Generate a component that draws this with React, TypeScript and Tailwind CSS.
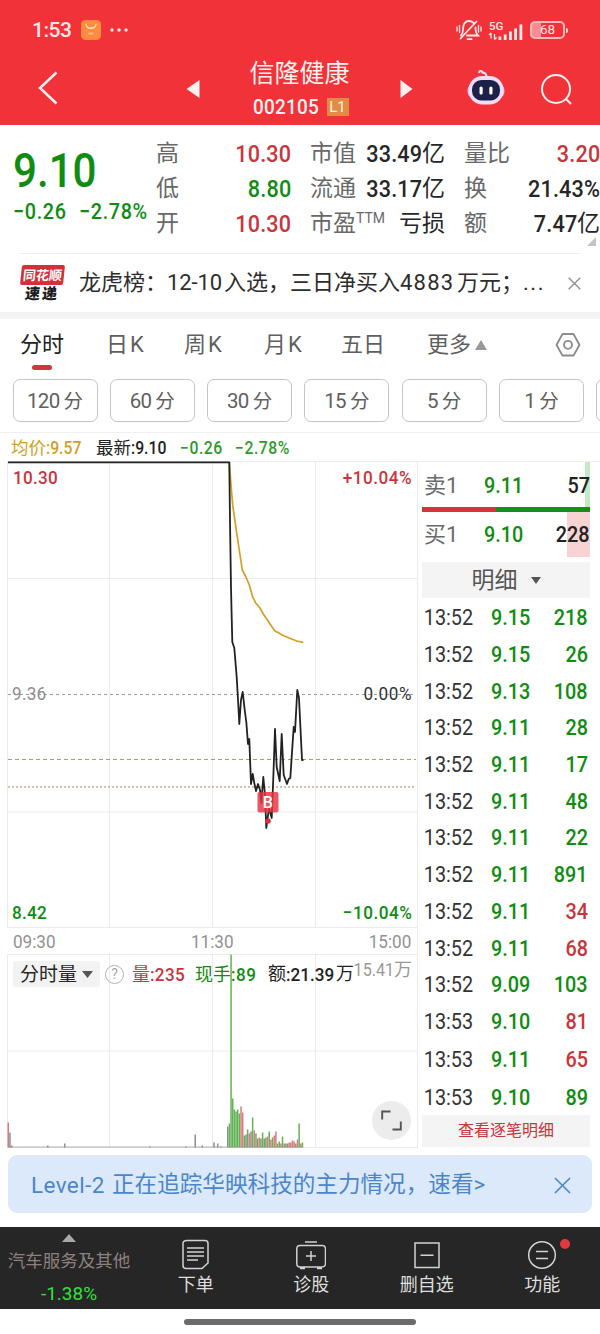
import React from 'react';

const RED = 'text-[#c8353d]';
const GREEN = 'text-[#108c12]';

type NumProps = { children: React.ReactNode; className?: string; left?: boolean };

// Slightly condensed digits
const Num: React.FC<NumProps> = ({ children, className = '', left }) => (
  <span className={`inline-block scale-x-90 whitespace-nowrap ${left ? 'origin-left' : 'origin-right'} ${className}`}>
    {children}
  </span>
);

const StatusBar: React.FC = () => (
  <div className="flex h-[60px] items-center pl-[32px] pr-[32px] text-[#ffe9e9]">
    <span className="w-[49px] text-[21px] font-medium leading-none tracking-[-0.5px]">1:53</span>
    <svg className="h-5 w-5" viewBox="0 0 20 20">
      <rect width="20" height="20" rx="4.5" fill="#ff8b3d" />
      <path d="M5 4.5C6 9.500 14 9.500 15 4.500" fill="none" stroke="#ffe3bd" strokeWidth="1.300" strokeLinecap="round" />
      <rect x="7.500" y="12.500" width="5" height="2" rx=".5" fill="#ffc08a" />
    </svg>
    <svg className="ml-[9px] h-1 w-[19px]" viewBox="0 0 19 4" fill="currentColor">
      <circle cx="2" cy="2" r="1.700" />
      <circle cx="9" cy="2" r="1.700" />
      <circle cx="16" cy="2" r="1.700" />
    </svg>
    <svg className="ml-auto h-[22px] w-[26px]" viewBox="0 0 26 22" fill="none" stroke="currentColor" strokeWidth="1.800" strokeLinecap="round">
      <path d="M5 16.500C8 13.500 6.500 10 7.500 6.500C8.600 3 11 2 13 2C15.500 2 17 3 18 4.500M19.500 8.500C19.500 12 20 14.500 22 16.500H11" />
      <path d="M4.500 19.500L20.500 2.500M11.500 20.200H15.500" />
      <path d="M1 8V12M3.500 6.500V13.500M22.500 6.500V13M25 8V12" strokeWidth="1.300" />
    </svg>
    <svg className="ml-[6px] h-[24px] w-[36px]" viewBox="0 -3 36 24" fill="currentColor">
      <text x="1" y="8.500" fontSize="11.500" fontWeight="500" fontFamily="Roboto, sans-serif">5G</text>
      <path d="M3 12V17.500M1 14L3 12M6.500 18.500V13M8.500 16.500L6.500 18.500" stroke="currentColor" fill="none" strokeWidth="1.300" />
      <rect x="10.500" y="15.500" width="2.800" height="3.500" />
      <rect x="15.800" y="13.500" width="2.800" height="5.500" />
      <rect x="21" y="10.500" width="2.800" height="8.500" />
      <rect x="26.200" y="7.500" width="2.800" height="11.500" />
      <rect x="31.500" y="3.500" width="2.800" height="15.500" />
    </svg>
    <div className="ml-[6px] flex items-center gap-[1px]">
      <div className="flex h-[18px] w-[35px] items-center justify-center rounded-[5px] border-2 border-[#fcb9bb] bg-linear-to-r from-[#f98c90] from-30% to-transparent to-30% text-[13.5px] leading-none">
        68
      </div>
      <div className="h-[5px] w-[2px] rounded-r bg-[#ffd6d6]" />
    </div>
  </div>
);

const TitleBar: React.FC = () => (
  <div className="flex h-[65px] items-center text-[#fff0f0]">
    <svg className="ml-[38px] mt-[-10px] h-[34px] w-[20px]" viewBox="0 0 20 34" fill="none" stroke="currentColor" strokeWidth="2.500">
      <path d="M18.500 1.500L2 17L18.500 32.500" />
    </svg>
    <svg className="ml-[128px] mt-[-8px] h-[20px] w-[14px]" viewBox="0 0 14 20" fill="currentColor">
      <path d="M13.500 1V19L.5 10Z" />
    </svg>
    <div className="flex w-[199px] flex-col items-center pb-[7px]">
      <div className="text-[25px] leading-[30px]">信隆健康</div>
      <div className="mt-[6px] flex items-center gap-[2px] pl-[2px]">
        <Num left className="w-[71px] text-[21px] font-medium leading-[24px] tracking-[0.3px]">002105</Num>
        <span className="ml-[1px] flex h-[18px] w-[22px] items-center justify-center bg-[#e08c42] text-[15px] leading-none">L1</span>
      </div>
    </div>
    <svg className="ml-[1px] mt-[-8px] h-[20px] w-[14px]" viewBox="0 0 14 20" fill="currentColor">
      <path d="M.5 1V19L12.500 10Z" />
    </svg>
    <svg className="ml-[53px] mt-[-10px] h-[36px] w-[38px]" viewBox="0 0 38 36">
      <path d="M12 3C12.500 0 16 .5 15.500 3.500M15.500 3C18 2.500 19.500 4 19.500 7" fill="none" stroke="#f3dcf5" strokeWidth="2.200" />
      <ellipse cx="3.500" cy="21" rx="3" ry="5.500" fill="#d9bdf5" />
      <ellipse cx="34.500" cy="21" rx="3" ry="5.500" fill="#d9bdf5" />
      <rect x="1.500" y="6" width="35" height="28.500" rx="14" fill="#f2dcf7" />
      <rect x="5" y="10" width="28" height="20.500" rx="9.500" fill="#1b2148" />
      <rect x="12.500" y="16.500" width="3.200" height="8" rx="1.600" fill="#fff" />
      <rect x="22.300" y="16.500" width="3.200" height="8" rx="1.600" fill="#fff" />
    </svg>
    <svg className="ml-[35px] mt-[-8px] h-[34px] w-[34px]" viewBox="0 0 34 34" fill="none" stroke="currentColor" strokeWidth="2">
      <circle cx="16" cy="17" r="14" />
      <path d="M25.500 26.500L31 32" />
    </svg>
  </div>
);

type Stat = { label: string; sup?: string; value: string; unit?: string; color: string };

const STATS: Stat[][] = [
  [
    { label: '高', value: '10.30', color: RED },
    { label: '低', value: '8.80', color: GREEN },
    { label: '开', value: '10.30', color: RED },
  ],
  [
    { label: '市值', value: '33.49', unit: '亿', color: 'text-[#262626]' },
    { label: '流通', value: '33.17', unit: '亿', color: 'text-[#262626]' },
    { label: '市盈', sup: 'TTM', value: '', unit: '亏损', color: 'text-[#262626]' },
  ],
  [
    { label: '量比', value: '3.20', color: RED },
    { label: '换', value: '21.43%', color: 'text-[#262626]' },
    { label: '额', value: '7.47', unit: '亿', color: 'text-[#262626]' },
  ],
];

const Quote: React.FC = () => (
  <section className="relative flex h-[128px] pt-[11px]">
    <div className={`w-[156px] shrink-0 pl-[13px] ${GREEN}`}>
      <div className="mt-[10px] h-[50px] origin-left scale-x-[0.86] text-[49px] font-medium leading-[50px]">9.10</div>
      <div className="mt-[4px] flex text-[22px] font-medium leading-[24px] tracking-[0.7px]">
        <Num left className="w-[66px]">−0.26</Num>
        <Num left>−2.78%</Num>
      </div>
    </div>
    <div className="flex grow gap-[19px]">
      {STATS.map((column, i) => (
        <div key={i} className={i === 2 ? 'w-[136px]' : 'w-[135px]'}>
          {column.map((s) => (
            <div key={s.label} className="flex h-[35px] items-center justify-between text-[23px] leading-none">
              <span className="flex text-[#686868]">
                {s.label}
                {s.sup && <span className="mt-[-1px] text-[14px] leading-none">{s.sup}</span>}
              </span>
              <span className={`flex items-center whitespace-nowrap ${s.color}`}>
                <Num className="text-[24px] font-medium tracking-[0.2px]">{s.value}</Num>
                {s.unit}
              </span>
            </div>
          ))}
        </div>
      ))}
    </div>
    <svg className="absolute right-[4px] bottom-[7px] h-[9px] w-[9px]" viewBox="0 0 9 9">
      <path d="M9 0V9H0Z" fill="#c4c4c4" />
    </svg>
  </section>
);

const News: React.FC = () => (
  <section className="mx-[19px] flex h-[59px] items-center border-t border-[#efefef] text-[#2d2d2d]">
    <div className="flex w-[46px] flex-col items-center leading-none">
      <div className="flex h-[20px] w-[43px] -skew-x-6 items-center justify-center rounded-[2px] bg-[#d5303a] text-[13px] font-bold text-white">同花顺</div>
      <div className="mt-[2px] -skew-x-6 text-[15px] font-black tracking-[2px] text-[#1d1d1d]">速递</div>
    </div>
    <div className="ml-[14px] flex grow text-[22px] leading-none whitespace-nowrap">
      <span>龙虎榜：</span>
      <span className="w-[57px] tracking-[-0.1px]">12-10</span>
      <span>入选，三日净买入</span>
      <span className="w-[57px] tracking-[1.2px]">4883</span>
      <span>万元；</span>
      <span className="tracking-[1.5px]">...</span>
    </div>
    <svg className="h-[13px] w-[13px] shrink-0" viewBox="0 0 13 13" stroke="#8c8c8c" strokeWidth="1.300">
      <path d="M.7 .7L12.300 12.300M12.300 .7L.7 12.300" />
    </svg>
  </section>
);

const Tabs: React.FC = () => (
  <nav className="flex h-[57px] items-start pl-[20px] pt-[14px] text-[22px] leading-[24px] text-[#5f5f5f]">
    <div className="flex w-[86px] flex-col text-[#222]">
      分时
      <span className="ml-[12px] mt-[8px] h-[5px] w-[20px] rounded-full bg-[#cf3640]" />
    </div>
    <div className="w-[78px]">日<span className="ml-[2px]">K</span></div>
    <div className="w-[80px]">周<span className="ml-[2px]">K</span></div>
    <div className="w-[77px]">月<span className="ml-[2px]">K</span></div>
    <div className="w-[86px]">五日</div>
    <div className="flex items-center gap-[4px]">
      更多
      <svg className="h-[10px] w-[12px]" viewBox="0 0 12 10"><path d="M6 0L12 10H0Z" fill="#999" /></svg>
    </div>
    <svg className="ml-[68px] mt-[-1px] h-[26px] w-[26px]" viewBox="0 0 26 26" fill="none" stroke="#8b8b8b" strokeWidth="1.800" strokeLinejoin="round">
      <path d="M7.500 2H18.500L24.500 13L18.500 23.500H7.500L1.500 13Z" />
      <circle cx="13" cy="12.800" r="4" />
    </svg>
  </nav>
);

const PERIODS = ['120', '60', '30', '15', '5', '1', ''];

const Periods: React.FC = () => (
  <div className="flex h-[57px] gap-[12.3px] overflow-hidden border-b border-[#f0f0f0] pl-[12.5px] pt-[3px]">
    {PERIODS.map((p) => (
      <div key={p} className="flex h-[43px] w-[85px] shrink-0 items-center justify-center gap-[4px] rounded-[7px] border border-[#c4c4c4] pt-[2px] text-[19.5px] leading-none text-[#606060]">
        {p && <><span className="text-[20.5px] tracking-[-0.7px]">{p}</span>分</>}
      </div>
    ))}
  </div>
);

const PRICE =
  'M8 1.300H229.300L230 60L231 127L232.300 181L234.300 187L236.700 216L238.300 244L239.300 263L241 239L242.700 231L244.700 249L246.300 261L248 283L249.300 278L251 323L252.700 313L254.300 322L256 330L258 323L260 329L261.300 342L263.300 316L265 334L266.300 367L269 347L271.700 357L273.300 317L275 268L276.700 306L279.700 320L281.700 273L283.700 314L287 323L288.700 318L290.300 317L293.700 266L295 271L297.300 229L299 237L302 299H303.500';
const AVERAGE =
  'M229.300 1L231 24L232.700 44L236.700 72L242.300 109L246 116L249.300 124L252.700 136L255.700 142L260 147L263.300 153L266.700 158L270 163L275 170L279 172L282 174L286.700 176L291.700 178L296.700 180L303.300 181.300';

const PriceChart: React.FC = () => (
  <div className="relative h-[467px] text-[19px] font-medium leading-none tracking-[0.3px]">
    <svg className="h-[467px] w-[418px]" viewBox="0 0 418 467" fill="none">
      <path d="M7 .5H418M7 117.500H418M7 351H418M7 466.500H418M7.500 0V467M109.500 0V467M212.500 0V467M315.500 0V467M417.500 0V467" stroke="#ebebeb" />
      <path d="M8 233.500H416" stroke="#999" strokeDasharray="3 3" />
      <path d="M8 298.500H416" stroke="#b09a68" strokeDasharray="4 3" />
      <path d="M8 326H416" stroke="#b9824a" strokeDasharray="2 2" />
      <path d={AVERAGE} stroke="#d3a022" strokeWidth="1.700" />
      <path d={PRICE} stroke="#222" strokeWidth="1.800" strokeLinejoin="round" />
      <circle cx="268" cy="360" r="2.800" fill="#d8303c" />
      <rect x="257.500" y="331" width="21" height="20.500" rx="2" fill="#e8333d" fillOpacity=".82" />
      <text x="268" y="347" textAnchor="middle" fontSize="16" fontWeight="500" fontFamily="Roboto, sans-serif" fill="#fff">B</text>
    </svg>
    <Num left className={`absolute left-[13px] top-[7px] ${RED}`}>10.30</Num>
    <Num className={`absolute right-[6px] top-[7px] tracking-[0.6px] ${RED}`}>+10.04%</Num>
    <Num left className="absolute left-[12px] top-[223px] font-normal text-[#8e8e8e]">9.36</Num>
    <Num className="absolute right-[6px] top-[223px] font-normal tracking-[0.6px] text-[#333]">0.00%</Num>
    <Num left className={`absolute left-[12px] top-[442px] ${GREEN}`}>8.42</Num>
    <Num className={`absolute right-[6px] top-[442px] tracking-[0.6px] ${GREEN}`}>−10.04%</Num>
  </div>
);

const BAR_R = '#d97b80';
const BAR_G = '#63b356';
const BAR_D = '#8b8f8b';

// [x, height, fill]
const BARS: [number, number, string][] = [
  [7.5, 25, BAR_R], [9.2, 15, BAR_D], [11, 2, BAR_D], [47, 2, BAR_D], [64, 4, BAR_D], [149, 1, BAR_D],
  [185, 1, BAR_D], [194.500, 13, BAR_D], [201.500, 2, BAR_D], [213.300, 5, BAR_D], [217, 4, BAR_D], [220, 1, BAR_D],
];

const BURST =
  '21d 24g 193g 49g 38g 36g 38g 34g 41r 35r 12g 13d 18g 14r 16d 30g 17r 14g 9d 10r 9g 15g 9g 10d 11r 16g 8r 10g 12r 16r 4g 6g 4r 11g 4r 4g 4d 5r 5r 7r 6r 4g 8r 24g 4r 5g';
BURST.split(' ').forEach((item, i) => {
  const tone = item.slice(-1);
  BARS.push([227 + i * 1.66, parseInt(item, 10), tone === 'r' ? BAR_R : tone === 'g' ? BAR_G : BAR_D]);
});

const VolumeChart: React.FC = () => (
  <div className="relative h-[193px] text-[18px] leading-none">
    <svg className="h-[194px] w-[418px]" viewBox="0 0 418 194" fill="none">
      <path d="M7 .5H418M7 97H418M7 193.500H418M7.500 0V194M109.500 0V194M212.500 0V194M315.500 0V194M417.500 0V194" stroke="#ebebeb" />
      {BARS.map(([x, h, fill]) => (
        <rect key={x} x={x} y={193.500 - h} width="1.500" height={h} fill={fill} />
      ))}
      <path d="M8 193H303" stroke="#9a8f8f" strokeWidth=".7" />
    </svg>
    <span className="absolute right-[6px] top-[7px] text-[18px] text-[#999]">
      <Num>15.41</Num>万
    </span>
    <div className="absolute left-[13px] top-[7px] flex items-center whitespace-nowrap">
      <div className="flex h-[26px] w-[87px] items-center justify-center gap-[5px] rounded-[3px] bg-[#f2f2f2] text-[19px] text-[#262626]">
        分时量
        <svg className="h-[7px] w-[11px]" viewBox="0 0 11 7"><path d="M0 0H11L5.500 7Z" fill="#555" /></svg>
      </div>
      <div className="ml-[5px] flex h-[19px] w-[19px] items-center justify-center rounded-full border-[1.5px] border-[#b5b5b5] text-[14px] text-[#aaa]">?</div>
      <span className={`ml-[8px] w-[63px] ${RED}`}>量<Num left className="text-[19px] font-medium tracking-[0.4px]">:235</Num></span>
      <span className={`w-[73px] ${GREEN}`}>现手<Num left className="text-[19px] font-medium tracking-[0.6px]">:89</Num></span>
      <span className="flex items-center text-[#222]">额<Num left className="w-[50px] text-[19px] font-medium">:21.39</Num>万</span>
    </div>
    <div className="absolute right-[7px] top-[147px] flex h-[39px] w-[39px] items-center justify-center rounded-full bg-[#ececec]">
      <svg className="h-[21px] w-[21px]" viewBox="0 0 21 21" fill="none" stroke="#555" strokeWidth="1.900">
        <path d="M1.200 9.500V1.500H9.500M19.800 11.500V19.500H11.500" />
      </svg>
    </div>
  </div>
);

const TICKS: [string, string, number, boolean][] = [
  ['13:52', '9.15', 218, false],
  ['13:52', '9.15', 26, false],
  ['13:52', '9.13', 108, false],
  ['13:52', '9.11', 28, false],
  ['13:52', '9.11', 17, false],
  ['13:52', '9.11', 48, false],
  ['13:52', '9.11', 22, false],
  ['13:52', '9.11', 891, false],
  ['13:52', '9.11', 34, true],
  ['13:52', '9.11', 68, true],
  ['13:52', '9.09', 103, false],
  ['13:53', '9.10', 81, true],
  ['13:53', '9.11', 65, true],
  ['13:53', '9.10', 89, false],
];

const OrderBook: React.FC = () => (
  <aside className="flex w-[182px] shrink-0 flex-col border-t border-[#f0f0f0] pl-[4px] pr-[10px] text-[22px] leading-none">
    <div className="flex h-[45px] items-center bg-linear-to-l from-[#c5e8c6] from-3% to-transparent to-3% pt-[2px]">
      <span className="w-[62px] pl-[2px] text-[#6a6a6a]">卖1</span>
      <Num left className={`font-medium ${GREEN}`}>9.11</Num>
      <Num className="ml-auto font-medium text-[#222]">57</Num>
    </div>
    <div className="flex h-[5px]">
      <div className="w-[74px] bg-[#d2353d]" />
      <div className="grow bg-[#109212]" />
    </div>
    <div className="flex h-[45px] items-center bg-linear-to-l from-[#f8d3d4] from-[23px] to-transparent to-[23px]">
      <span className="w-[62px] pl-[2px] text-[#6a6a6a]">买1</span>
      <Num left className={`font-medium ${GREEN}`}>9.10</Num>
      <Num className="ml-auto font-medium text-[#222]">228</Num>
    </div>
    <div className="mt-[5px] flex h-[36px] items-center justify-center gap-[13px] bg-[#f4f4f4] text-[23px] text-[#555]">
      明细
      <svg className="h-[7px] w-[10px]" viewBox="0 0 10 7"><path d="M0 0H10L5 7Z" fill="#555" /></svg>
    </div>
    <div className="mt-[2px] flex flex-col">
      {TICKS.map(([time, price, volume, up], i) => (
        <div key={i} className={`flex items-center pr-[2px] font-medium ${i < 12 ? 'h-[36.7px]' : 'h-[38.5px]'}`}>
          <Num left className="w-[69px] pl-[2px] font-normal text-[#333]">{time}</Num>
          <Num left className={GREEN}>{price}</Num>
          <Num className={`ml-auto ${up ? RED : GREEN}`}>{volume}</Num>
        </div>
      ))}
    </div>
    <div className="mt-[-2px] flex h-[32px] items-center justify-center bg-[#f4f4f4] text-[16px] text-[#c8353d]">查看逐笔明细</div>
  </aside>
);

const Banner: React.FC = () => (
  <div className="mx-[8px] mt-[7px] flex h-[58px] items-center rounded-[9px] bg-[#dce9fb] pl-[23px] pr-[21px] pt-[2px] text-[22.6px] leading-none text-[#4a86c8]">
    <span className="w-[81px] text-[22.5px] tracking-[0.4px]">Level-2</span>
    <span>正在追踪华映科技的主力情况，速看&gt;</span>
    <svg className="ml-auto h-[17px] w-[17px]" viewBox="0 0 17 17" stroke="currentColor" strokeWidth="1.600">
      <path d="M1 1L16 16M16 1L1 16" />
    </svg>
  </div>
);

const ICONS: { label: string; icon: React.ReactNode }[] = [
  {
    label: '下单',
    icon: <path d="M6 1.500H24Q27 1.500 27 4.500V24L21 29.500H5Q2 29.500 2 26.500V4.500Q2 1.500 6 1.500ZM6 9H23M6 13H23M6 17H23M6 21H17" />,
  },
  {
    label: '诊股',
    icon: <path d="M4 6.500H26Q29.500 6.500 29.500 10V24.500Q29.500 28 26 28H4Q.8 28 .8 24.500V10Q.8 6.500 4 6.500ZM9 3H21M15 12V22M10 17H20M4 29.500H9M21 29.500H26" />,
  },
  { label: '删自选', icon: <path d="M3 4H27V28.500H3ZM8.500 16.200H21.500" /> },
  { label: '功能', icon: <><circle cx="15" cy="16" r="13.300" /><path d="M9 12.500H21M9 19.500H21" /></> },
];

const BottomNav: React.FC = () => (
  <footer className="mt-[14px] flex h-[82px] bg-[#262626]">
    <div className="flex w-[138px] flex-col items-center pt-[7px] leading-none">
      <svg className="h-[8px] w-[14px]" viewBox="0 0 14 8"><path d="M7 0L14 8H0Z" fill="#a8a8a8" /></svg>
      <span className="mt-[11px] text-[17.5px] text-[#8e807c]">汽车服务及其他</span>
      <span className="mt-[13px] text-[19px] text-[#2fe339]">-1.38%</span>
    </div>
    {ICONS.map(({ label, icon }, i) => (
      <div key={label} className="relative flex w-[115.5px] flex-col items-center pt-[12px]">
        <svg className="h-[31px] w-[30px]" viewBox="0 0 30 31" fill="none" stroke="#d2d2d2" strokeWidth="1.500">{icon}</svg>
        <span className="mt-[5px] text-[18px] leading-[20px] text-[#dedede]">{label}</span>
        {i === 3 && <span className="absolute left-[75px] top-[12px] h-[10px] w-[10px] rounded-full bg-[#e03a3f]" />}
      </div>
    ))}
  </footer>
);

const App: React.FC = () => {
  return (
    <div className="flex h-[1334px] w-[600px] flex-col overflow-hidden bg-white font-['Roboto','Noto_Sans_CJK_SC',sans-serif]">
      <header className="h-[125px] bg-[#f13238]">
        <StatusBar />
        <TitleBar />
      </header>
      <Quote />
      <News />
      <div className="h-[7px] bg-[#f4f4f4]" />
      <Tabs />
      <Periods />

      {/* Current values */}
      <div className="flex h-[28px] items-center pt-[3px] pl-[11px] text-[17.5px] leading-none">
        <span className="w-[85px] text-[#d3a022]">均价<Num left className="font-medium">:9.57</Num></span>
        <span className="w-[84px] text-[#222]">最新<Num left className="font-medium">:9.10</Num></span>
        <Num left className="w-[55px] font-medium tracking-[0.6px] text-[#2f9a2c]">−0.26</Num>
        <Num left className="font-medium tracking-[0.6px] text-[#2f9a2c]">−2.78%</Num>
      </div>

      <main className="flex h-[687px]">
        <div className="w-[418px] shrink-0">
          <PriceChart />
          <div className="flex h-[26px] items-center border-r border-[#ebebeb] pt-[3px] pl-[13px] pr-[6px] text-[19px] text-[#929292]">
            <Num left className="w-[178px]">09:30</Num>
            <Num left>11:30</Num>
            <Num className="ml-auto">15:00</Num>
          </div>
          <VolumeChart />
        </div>
        <OrderBook />
      </main>

      <Banner />
      <BottomNav />
      <div className="mx-auto mt-[10px] h-[6px] w-[232px] rounded-full bg-[#6b6b6b]" />
    </div>
  );
};

export default App;
